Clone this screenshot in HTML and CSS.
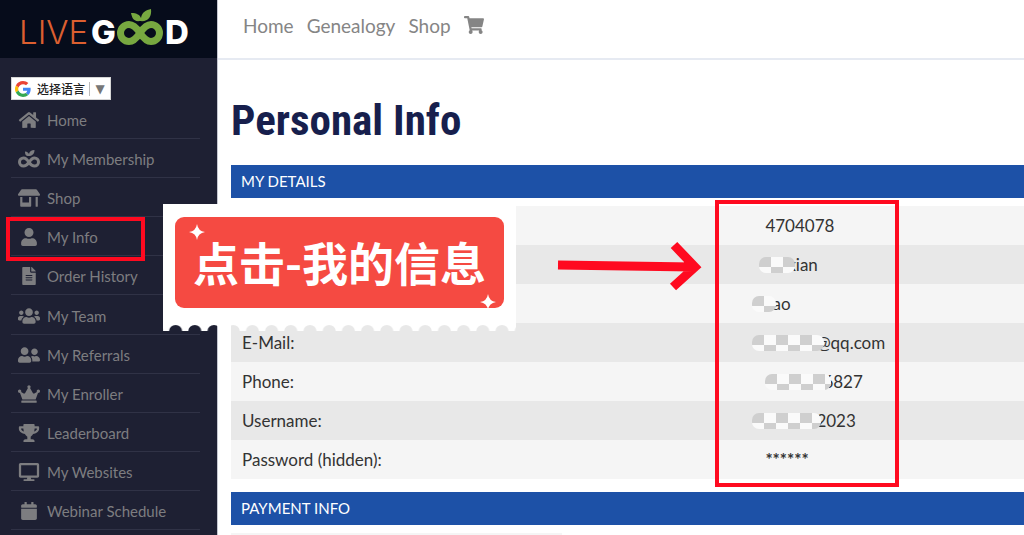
FILE: index.html
```html
<!DOCTYPE html>
<html lang="en">
<head>
    <meta charset="UTF-8">
    <meta name="viewport" content="width=device-width, initial-scale=1">
    <title>Personal Info</title>
    <link rel="stylesheet" href="styles.css">
</head>
<body>
<div class="page">
    <aside class="sidebar">
        <a class="logo" href="#" aria-label="LiveGood">
            <svg width="176" height="58" viewBox="0 0 176 58">
                <text class="logo-live" x="0" y="44">LIVE</text>
                <text class="logo-good" x="72" y="44">G</text>
                <text class="logo-good" x="146" y="44">D</text>
                <path d="M121 33C117 27 114 24.500 110 24.500A8.500 8.500 0 0 0 110 41.500C114 41.500 117 39 121 33C125 27 128 24.500 132 24.500A8.500 8.500 0 0 1 132 41.500C128 41.500 125 39 121 33Z" fill="none" stroke="#77a840" stroke-width="7"/>
                <path d="M121 21C114 22 113 17 112 13C118 13 121 15 122 18C123 12 127 10 132 9C133 17 129 22 121 21Z" fill="#77a840"/>
            </svg>
        </a>
        <div class="translate">
            <svg width="16" height="16" viewBox="0 0 48 48">
                <path fill="#ea4335" d="M24 9.500c3.540 0 6.710 1.220 9.210 3.600l6.850-6.850C35.900 2.380 30.470 0 24 0 14.620 0 6.510 5.380 2.560 13.220l7.980 6.190C12.430 13.720 17.740 9.500 24 9.500z"/>
                <path fill="#4285f4" d="M46.980 24.550c0-1.570-.15-3.090-.38-4.550H24v9.020h12.940c-.58 2.960-2.260 5.480-4.780 7.180l7.730 6c4.510-4.180 7.090-10.360 7.090-17.650z"/>
                <path fill="#fbbc05" d="M10.530 28.590A14.500 14.500 0 0 1 9.770 24c0-1.600.27-3.140.76-4.590l-7.980-6.190A23.900 23.900 0 0 0 0 24c0 3.880.92 7.540 2.560 10.780l7.970-6.190z"/>
                <path fill="#34a853" d="M24 48c6.480 0 11.930-2.130 15.890-5.810l-7.730-6c-2.150 1.450-4.920 2.300-8.160 2.300-6.260 0-11.570-4.220-13.470-9.910l-7.980 6.190C6.510 42.620 14.620 48 24 48z"/>
            </svg>
            <select class="language" aria-label="选择语言">
                <option>选择语言</option>
            </select>
            <span class="arrow">▼</span>
        </div>
        <ul class="menu">
            <li><a href="#">
                <svg class="icon" viewBox="0 0 576 512"><path d="M280.370 148.260L96 300.110V464a16 16 0 0 0 16 16l112.060-.29a16 16 0 0 0 15.920-16V368a16 16 0 0 1 16-16h64a16 16 0 0 1 16 16v95.640a16 16 0 0 0 16 16.050L464 480a16 16 0 0 0 16-16V300L295.670 148.260a12.190 12.190 0 0 0-15.300 0zM571.600 251.470L488 182.560V44.050a12 12 0 0 0-12-12h-56a12 12 0 0 0-12 12v72.610L318.470 43a48 48 0 0 0-61 0L4.340 251.470a12 12 0 0 0-1.600 16.900l25.500 31A12 12 0 0 0 45.150 301l235.220-193.740a12.190 12.190 0 0 1 15.300 0L530.900 301a12 12 0 0 0 16.900-1.600l25.500-31a12 12 0 0 0-1.700-16.930z"/></svg>
                Home</a></li>
            <li><a href="#">
                <svg class="icon" viewBox="0 0 44 36"><path d="M22 25C19 20 16 16 11 16A7.500 7.500 0 0 0 11 32C16 32 19 29 22 25C25 20 28 16 33 16A7.500 7.500 0 0 1 33 32C28 32 25 29 22 25Z" fill="none" stroke="currentColor" stroke-width="6"/><path d="M21 12C15 12 14 8 14 3C19 3 21 6 22 8C23 3 27 0 33 0C33 8 28 12 21 12Z"/></svg>
                My Membership</a></li>
            <li><a href="#">
                <svg class="icon" viewBox="0 0 640 512"><path d="M320 384H128V224H64v256c0 17.700 14.300 32 32 32h256c17.700 0 32-14.300 32-32V224h-64v160zm314.600-241.800l-85.300-128c-6-8.900-16-14.200-26.700-14.200H117.400c-10.700 0-20.700 5.300-26.600 14.200l-85.300 128c-14.200 21.300 1 49.800 26.600 49.800H608c25.500 0 40.700-28.500 26.600-49.800zM512 496c0 8.800 7.200 16 16 16h32c8.800 0 16-7.200 16-16V224h-64v272z"/></svg>
                Shop</a></li>
            <li><a href="#">
                <svg class="icon" viewBox="0 0 448 512"><path d="M224 256c70.700 0 128-57.300 128-128S294.700 0 224 0 96 57.300 96 128s57.300 128 128 128zm89.600 32h-16.700c-22.200 10.200-46.900 16-72.900 16s-50.600-5.800-72.900-16h-16.700C60.200 288 0 348.200 0 422.400V464c0 26.500 21.500 48 48 48h352c26.500 0 48-21.500 48-48v-41.600c0-74.200-60.200-134.400-134.400-134.400z"/></svg>
                My Info</a></li>
            <li><a href="#">
                <svg class="icon" viewBox="0 0 384 512"><path d="M224 136V0H24C10.700 0 0 10.700 0 24v464c0 13.300 10.700 24 24 24h336c13.300 0 24-10.700 24-24V160H248c-13.200 0-24-10.800-24-24zm64 236c0 6.600-5.400 12-12 12H108c-6.600 0-12-5.400-12-12v-8c0-6.600 5.400-12 12-12h168c6.600 0 12 5.400 12 12v8zm0-64c0 6.600-5.400 12-12 12H108c-6.600 0-12-5.400-12-12v-8c0-6.600 5.400-12 12-12h168c6.600 0 12 5.400 12 12v8zm0-72v8c0 6.600-5.400 12-12 12H108c-6.600 0-12-5.400-12-12v-8c0-6.600 5.400-12 12-12h168c6.600 0 12 5.400 12 12zm96-114.100v6.100H256V0h6.100c6.400 0 12.500 2.500 17 7l97.900 98c4.500 4.500 7 10.600 7 16.900z"/></svg>
                Order History</a></li>
            <li><a href="#">
                <svg class="icon" viewBox="0 0 640 512"><path d="M96 224c35.300 0 64-28.700 64-64s-28.700-64-64-64-64 28.700-64 64 28.700 64 64 64zm448 0c35.300 0 64-28.700 64-64s-28.700-64-64-64-64 28.700-64 64 28.700 64 64 64zm32 32h-64c-17.600 0-33.500 7.100-45.100 18.600 40.300 22.100 68.900 62 75.100 109.400h66c17.700 0 32-14.300 32-32v-32c0-35.300-28.700-64-64-64zm-256 0c61.900 0 112-50.100 112-112S381.900 32 320 32 208 82.100 208 144s50.100 112 112 112zm76.800 32h-8.300c-20.800 10-43.900 16-68.500 16s-47.600-6-68.500-16h-8.300C179.600 288 128 339.600 128 403.200V432c0 26.500 21.500 48 48 48h288c26.500 0 48-21.500 48-48v-28.800c0-63.600-51.600-115.200-115.200-115.200zm-223.700-13.400C161.500 263.100 145.600 256 128 256H64c-35.300 0-64 28.700-64 64v32c0 17.700 14.300 32 32 32h65.900c6.300-47.400 34.900-87.300 75.200-109.400z"/></svg>
                My Team</a></li>
            <li><a href="#">
                <svg class="icon" viewBox="0 0 640 512"><path d="M192 256c61.900 0 112-50.100 112-112S253.900 32 192 32 80 82.100 80 144s50.100 112 112 112zm76.800 32h-8.300c-20.800 10-43.900 16-68.500 16s-47.600-6-68.500-16h-8.300C51.600 288 0 339.600 0 403.200V432c0 26.500 21.500 48 48 48h288c26.500 0 48-21.500 48-48v-28.800c0-63.600-51.600-115.200-115.200-115.200zM480 256c53 0 96-43 96-96s-43-96-96-96-96 43-96 96 43 96 96 96zm48 32h-3.800c-13.900 4.800-28.600 8-44.200 8s-30.300-3.200-44.200-8H432c-20.400 0-39.200 5.900-55.700 15.400 24.400 26.300 39.700 61.200 39.700 99.800v38.400c0 2.200-.5 4.300-.6 6.400H592c26.500 0 48-21.500 48-48 0-61.900-50.100-112-112-112z"/></svg>
                My Referrals</a></li>
            <li><a href="#">
                <svg class="icon" viewBox="0 0 640 512"><path d="M528 448H112c-8.800 0-16 7.200-16 16v32c0 8.800 7.200 16 16 16h416c8.800 0 16-7.200 16-16v-32c0-8.800-7.200-16-16-16zm64-320c-26.500 0-48 21.500-48 48 0 7.100 1.600 13.700 4.400 19.800L476 239.200c-15.400 9.200-35.300 4-44.200-11.600L350.300 85C361 76.200 368 63 368 48c0-26.500-21.500-48-48-48s-48 21.500-48 48c0 15 7 28.200 17.700 37l-81.500 142.600c-8.900 15.600-28.900 20.800-44.200 11.600l-72.300-43.400c2.700-6 4.400-12.700 4.400-19.800 0-26.500-21.500-48-48-48S0 149.500 0 176s21.500 48 48 48c2.600 0 5.200-.4 7.700-.8L128 416h384l72.300-192.800c2.500.4 5.100.8 7.700.8 26.500 0 48-21.500 48-48s-21.500-48-48-48z"/></svg>
                My Enroller</a></li>
            <li><a href="#">
                <svg class="icon" viewBox="0 0 576 512"><path d="M552 64H448V24c0-13.300-10.700-24-24-24H152c-13.300 0-24 10.700-24 24v40H24C10.700 64 0 74.700 0 88v56c0 35.700 22.500 72.400 61.900 100.700 31.500 22.700 69.800 37.100 110 41.700C203.300 338.500 240 360 240 360v72h-48c-35.300 0-64 20.700-64 56v12c0 6.600 5.400 12 12 12h296c6.600 0 12-5.400 12-12v-12c0-35.300-28.700-56-64-56h-48v-72s36.700-21.500 68.100-73.600c40.300-4.600 78.600-19 110-41.700 39.300-28.300 61.900-65 61.900-100.700V88c0-13.300-10.700-24-24-24zM99.300 192.800C74.900 175.200 64 155.600 64 144v-16h64.200c1 32.600 5.800 61.200 12.800 86.200-15.100-5.200-29.200-12.400-41.700-21.400zM512 144c0 16.100-17.700 36.100-35.300 48.800-12.500 9-26.700 16.200-41.800 21.400 7-25 11.800-53.600 12.800-86.200H512v16z"/></svg>
                Leaderboard</a></li>
            <li><a href="#">
                <svg class="icon" viewBox="0 0 576 512"><path d="M528 0H48C21.500 0 0 21.500 0 48v320c0 26.500 21.500 48 48 48h192l-16 48h-72c-13.300 0-24 10.700-24 24s10.700 24 24 24h272c13.300 0 24-10.700 24-24s-10.700-24-24-24h-72l-16-48h192c26.500 0 48-21.500 48-48V48c0-26.500-21.500-48-48-48zm-16 352H64V64h448v288z"/></svg>
                My Websites</a></li>
            <li><a href="#">
                <svg class="icon" viewBox="0 0 448 512"><path d="M12 192h424c6.600 0 12 5.400 12 12v260c0 26.500-21.500 48-48 48H48c-26.500 0-48-21.500-48-48V204c0-6.600 5.400-12 12-12zm436-44v-36c0-26.500-21.500-48-48-48h-48V12c0-6.600-5.400-12-12-12h-40c-6.600 0-12 5.400-12 12v52H160V12c0-6.600-5.400-12-12-12h-40c-6.600 0-12 5.400-12 12v52H48C21.500 64 0 85.500 0 112v36c0 6.600 5.400 12 12 12h424c6.600 0 12-5.400 12-12z"/></svg>
                Webinar Schedule</a></li>
        </ul>
    </aside>
    <div class="main">
        <nav class="topbar">
            <a href="#">Home</a>
            <a href="#">Genealogy</a>
            <a href="#">Shop</a>
            <a href="#" aria-label="Cart">
                <svg class="cart" viewBox="0 0 576 512"><path d="M528.120 301.319l47.273-208C578.806 78.301 567.391 64 551.990 64H159.208l-9.166-44.810C147.758 8.021 137.930 0 126.529 0H24C10.745 0 0 10.745 0 24v16c0 13.255 10.745 24 24 24h69.883l70.248 343.435C147.325 417.100 136 435.222 136 456c0 30.928 25.072 56 56 56s56-25.072 56-56c0-15.674-6.447-29.835-16.824-40h209.647C430.447 426.165 424 440.326 424 456c0 30.928 25.072 56 56 56s56-25.072 56-56c0-22.172-12.888-41.332-31.579-50.405l5.517-24.276c3.413-15.018-8.002-29.319-23.403-29.319H218.117l-6.545-32h293.145c11.206 0 20.920-7.754 23.403-18.681z"/></svg>
            </a>
        </nav>
        <div class="content">
            <h1>Personal Info</h1>
            <h2>MY DETAILS</h2>
            <table class="details">
                <tr><th></th><td>4704078</td></tr>
                <tr><th></th><td><div class="masked out-sm"><svg class="mosaic" width="36" height="16"><rect width="36" height="16" rx="7" fill="url(#check)"/></svg>xian</div></td></tr>
                <tr><th></th><td><div class="masked out-md"><svg class="mosaic" width="24" height="16"><rect width="24" height="16" rx="7" fill="url(#check)"/></svg>iao</div></td></tr>
                <tr><th>E-Mail:</th><td><div class="masked out-md"><svg class="mosaic" width="72" height="16"><rect width="72" height="16" rx="7" fill="url(#check)"/></svg>@qq.com</div></td></tr>
                <tr><th>Phone:</th><td><div class="masked"><svg class="mosaic" width="66" height="16"><rect width="66" height="16" rx="7" fill="url(#check)"/></svg>6827</div></td></tr>
                <tr><th>Username:</th><td><div class="masked out-md"><svg class="mosaic" width="72" height="16"><rect width="69" height="16" rx="7" fill="url(#check)"/></svg>2023</div></td></tr>
                <tr><th>Password (hidden):</th><td class="hidden-value">******</td></tr>
            </table>
            <h2>PAYMENT INFO</h2>
            <div class="payment"></div>
        </div>
    </div>

    <!-- tutorial marks over the page -->
    <div class="frame frame-menu"></div>
    <div class="frame frame-values"></div>
    <svg class="pointer" width="146" height="52" viewBox="0 0 146 52">
        <path d="M1 24L136 26M117 4L138 26L116 46" fill="none" stroke="#ff0a20" stroke-width="9"/>
    </svg>
    <div class="sticker">
        <svg class="paper" width="353" height="127">
            <defs>
                <pattern id="holes" x="3" y="0" width="19.200" height="127" patternUnits="userSpaceOnUse">
                    <rect width="20" height="127" fill="#fff"/>
                    <ellipse cx="9.600" cy="127" rx="6.500" ry="6" fill="#000"/>
                </pattern>
                <mask id="stamp"><rect width="353" height="127" fill="url(#holes)"/></mask>
                <pattern id="check" width="24" height="20" patternUnits="userSpaceOnUse">
                    <rect width="24" height="20" fill="#fafafa"/>
                    <path d="M0 0h12v10h12v10H12V10H0z" fill="#cfcfcf"/>
                </pattern>
            </defs>
            <rect width="353" height="127" fill="#fff" mask="url(#stamp)"/>
        </svg>
        <div class="label">点击-我的信息
            <svg class="spark spark-top" viewBox="0 0 16 16"><path d="M8 0Q9 7 16 8Q9 9 8 16Q7 9 0 8Q7 7 8 0Z"/></svg>
            <svg class="spark spark-bottom" viewBox="0 0 16 16"><path d="M8 0Q9 7 16 8Q9 9 8 16Q7 9 0 8Q7 7 8 0Z"/></svg>
        </div>
    </div>
</div>
</body>
</html>
```

FILE: styles.css
```css
*{
    box-sizing: border-box;
    margin: 0;
    padding: 0;
}
body{
    font-family: Lato, "Noto Sans CJK SC", sans-serif;
    background: #fff;
    color: #333;
}
a{
    color: inherit;
    text-decoration: none;
}
.page{
    position: relative;
    display: flex;
    height: 100vh;
    overflow: hidden;
}

/* sidebar */
.sidebar{
    width: 218px;
    flex: none;
    display: flex;
    flex-direction: column;
    padding-bottom: 5px;
    background: #1e2033;
    border-right: 1px solid #c4c6d0;
    color: #7d7d80;
}
.logo{
    display: block;
    height: 58px;
    padding-left: 19px;
    background: #060c1b;
}
.logo svg{
    display: block;
}
.logo-live,
.logo-good{
    font-family: Inter, sans-serif;
    font-size: 33px;
}
.logo-live{
    font-weight: 300;
    fill: #dc5f30;
}
.logo-good{
    font-weight: 800;
    fill: #fff;
}
.translate{
    display: flex;
    align-items: center;
    width: 100px;
    height: 23px;
    margin: 19px 0 0 11px;
    padding-left: 3px;
    background: #fff;
    border: 1px solid #d5d5d5;
}
.language{
    appearance: none;
    width: 59px;
    padding-left: 6px;
    border: 0;
    border-right: 1px solid #bbb;
    background: none;
    color: #222;
    font-family: "Noto Sans CJK SC", sans-serif;
    font-size: 12px;
    font-weight: 500;
    line-height: 14px;
}
.arrow{
    flex: 1;
    color: #777;
    font-family: "DejaVu Sans", sans-serif;
    font-size: 12px;
    text-align: center;
}
.menu{
    flex: 1;
    display: flex;
    flex-direction: column;
    margin: 0 17px 0 11px;
    list-style: none;
}
.menu li{
    flex: 1;
    border-bottom: 1px solid #303246;
}
.menu a{
    display: flex;
    align-items: center;
    gap: 7px;
    height: 100%;
    padding: 2px 0 0 7px;
    font-size: 15px;
}
.icon{
    width: 22px;
    height: 18px;
    fill: currentColor;
}

/* content */
.main{
    flex: 1;
}
.topbar{
    display: flex;
    align-items: center;
    gap: 13px;
    height: 60px;
    padding: 0 25px 8px;
    border-bottom: 2px solid #e6eaf2;
    color: #858585;
    font-size: 19px;
}
.cart{
    display: block;
    width: 20px;
    height: 18px;
    fill: currentColor;
}
.content{
    padding: 35px 0 0 13px;
}
h1{
    margin-bottom: 20px;
    color: #171f4d;
    font-family: "Roboto Condensed", "Liberation Sans Narrow", Roboto, sans-serif;
    font-size: 43px;
    line-height: 50px;
}
h2{
    padding-left: 10px;
    background: #1d51a7;
    color: #fff;
    font-size: 15px;
    font-weight: 400;
    line-height: 33px;
}
.details{
    width: 100%;
    margin: 8px 0 13px;
    border-collapse: collapse;
    table-layout: fixed;
}
.details tr{
    height: 39px;
    background: #f5f5f5;
}
.details tr:nth-child(even){
    background: #e8e8e8;
}
.details th,
.details td{
    padding-left: 11px;
    font-size: 17px;
    font-weight: 400;
    line-height: 20px;
    text-align: left;
}
.details th{
    width: 66%;
}
.details .hidden-value{
    font-weight: 700;
}
.masked{
    display: flex;
    align-items: center;
}
.mosaic{
    position: relative;
    margin-right: -8px;
}
.out-sm{
    margin-left: -6px;
}
.out-md{
    margin-left: -13px;
}
.payment{
    width: 331px;
    height: 39px;
    margin-top: 8px;
    background: #f5f5f5;
}

/* marks */
.frame{
    position: absolute;
    border: 4px solid #ff0a20;
}
.frame-menu{
    left: 6px;
    top: 217px;
    width: 139px;
    height: 44px;
}
.frame-values{
    left: 715px;
    top: 200px;
    width: 184px;
    height: 287px;
}
.pointer{
    position: absolute;
    left: 557px;
    top: 241px;
}
.sticker{
    position: absolute;
    left: 163px;
    top: 204px;
    padding: 13px 12px 23px;
}
.paper{
    position: absolute;
    left: 0;
    top: 0;
}
.label{
    position: relative;
    width: 329px;
    padding-bottom: 3px;
    border-radius: 9px;
    background: #f54a42;
    color: #fff;
    font-family: "Noto Sans CJK SC", sans-serif;
    font-size: 46px;
    font-weight: 700;
    line-height: 88px;
    text-align: center;
}
.spark{
    position: absolute;
    width: 16px;
    height: 16px;
    fill: #fff;
}
.spark-top{
    left: 14px;
    top: 7px;
}
.spark-bottom{
    right: 8px;
    bottom: -2px;
}
```
